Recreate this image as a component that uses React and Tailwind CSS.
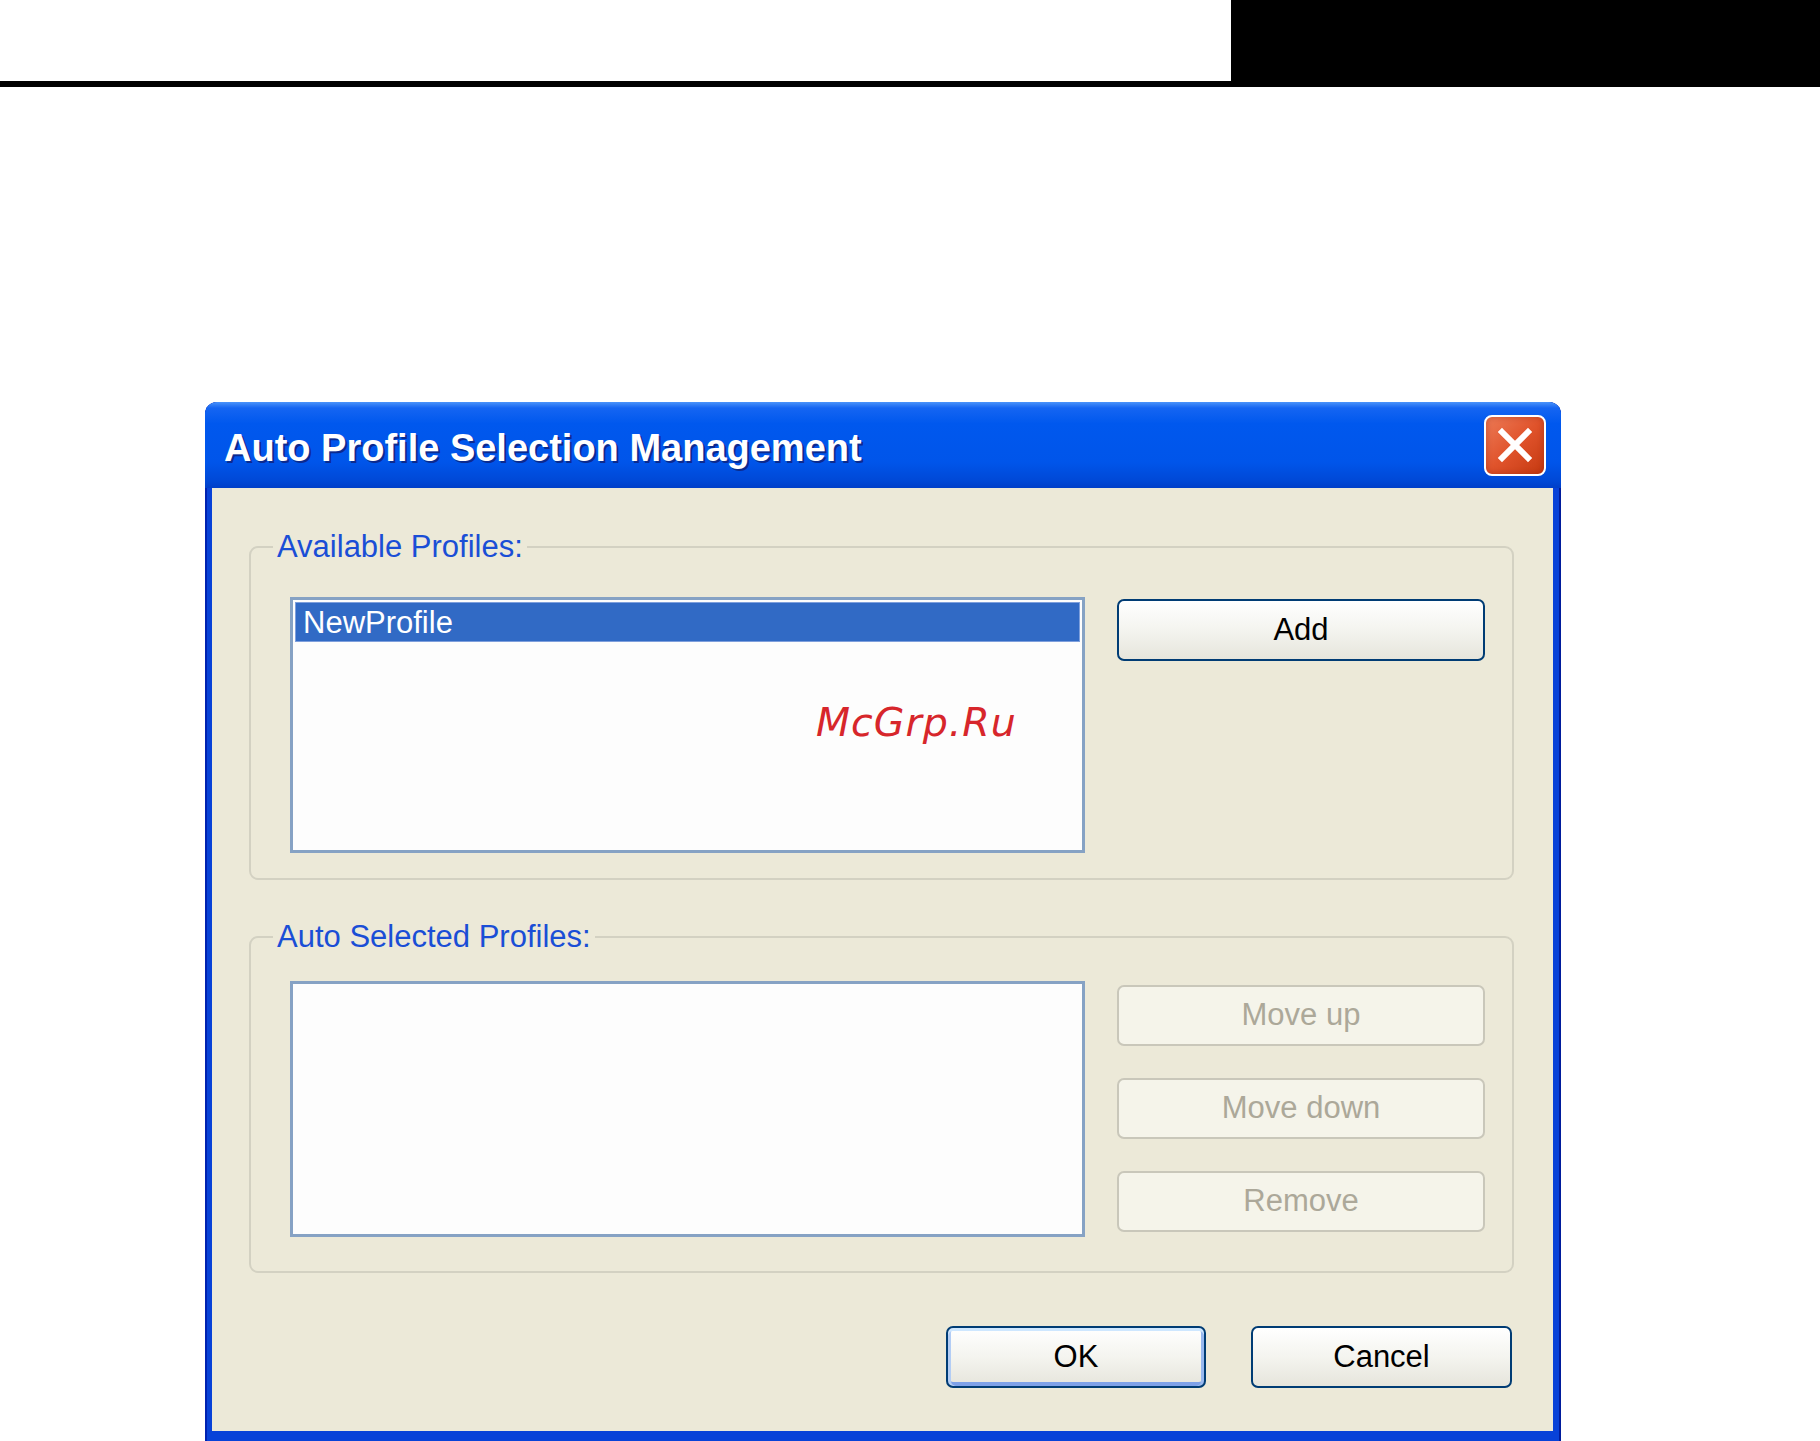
import React from "react"

const XpButton = ({ label, isDefault, disabled, className = "" }) => {
    if (disabled) {
        return (
            <div className={`flex items-center justify-center h-[61px] rounded-[7px] border-2 border-[#c9c7ba] bg-[#f5f4ea] text-[#aca899] ${className}`}>
                {label}
            </div>
        )
    }
    return (
        <div
            className={`flex items-center justify-center h-[62px] rounded-[7px] border-2 border-[#003c74] bg-gradient-to-b from-[#ffffff] via-[#f4f4ef] to-[#e6e5dc] text-black ${
                isDefault ? "shadow-[inset_0_3px_0_#cee7ff,inset_3px_0_0_#b3cdf5,inset_-3px_0_0_#98b8ee,inset_0_-4px_0_#7ea1e8]" : ""
            } ${className}`}
        >
            {label}
        </div>
    )
}

const ListBox = ({ children, className = "" }) => (
    <div className={`relative w-[795px] h-[256px] border-[3px] border-[#86a2c4] bg-[#fdfdfd] p-[2px] ${className}`}>
        {children}
    </div>
)

const Group = ({ title, children, className = "" }) => (
    <fieldset className={`min-w-0 w-[1265px] ml-[37px] rounded-[9px] border-2 border-[#d3d1c2] ${className}`}>
        <legend className="ml-[22px] px-[4px] leading-[36px] text-[#1a4ed6]">{title}</legend>
        {children}
    </fieldset>
)

const CloseButton = () => (
    <div className="ml-auto mr-[15px] w-[62px] h-[61px] rounded-[8px] border-2 border-white bg-gradient-to-br from-[#ec7a55] via-[#e0532b] to-[#c5390f] flex items-center justify-center shadow-[inset_0_0_6px_rgba(120,20,0,0.35)]">
        <svg width="36" height="36" viewBox="0 0 36 36">
            <path d="M5 5 L31 31 M31 5 L5 31" stroke="white" strokeWidth="6" strokeLinecap="square" />
        </svg>
    </div>
)

const Dialog = () => (
    <div className="w-[1356px] h-[1039px] rounded-t-[12px] bg-[#0842d8] flex flex-col overflow-hidden shadow-[inset_2px_0_0_#0022b0,inset_-2px_0_0_#001c9c]">
        <div className="h-[86px] shrink-0 flex items-center [background-image:linear-gradient(to_bottom,#4a93fa_0%,#1565f2_7%,#0058ee_25%,#0055ea_70%,#0048d6_92%,#003fc8_100%)]">
            <span className="pl-[19px] pt-[6px] text-[38px] font-bold text-white [text-shadow:2px_2px_0_#0b2a8f]">
                Auto Profile Selection Management
            </span>
            <CloseButton />
        </div>
        <div className="flex-1 ml-[7px] mr-[8px] mb-[10px] bg-[#ece9d8] text-[31px] flex flex-col">
            <Group title="Available Profiles:" className="mt-[41px]">
                <div className="flex items-start gap-[32px] pl-[39px] pr-[27px] pt-[32px] pb-[25px]">
                    <ListBox>
                        <div className="h-[40px] bg-[#316ac5] border border-[#7e9fdc] flex items-center pl-[7px] text-white leading-none">
                            NewProfile
                        </div>
                        <span className="absolute left-[523px] top-[102px] font-['DejaVu_Sans',sans-serif] italic text-[39.5px] leading-[40px] tracking-[1px] text-[#d7262b]">
                            McGrp.Ru
                        </span>
                    </ListBox>
                    <XpButton label="Add" className="w-[368px] mt-[2px]" />
                </div>
            </Group>
            <Group title="Auto Selected Profiles:" className="mt-[39px]">
                <div className="flex items-start gap-[32px] pl-[39px] pr-[27px] pt-[26px] pb-[34px]">
                    <ListBox />
                    <div className="w-[368px] mt-[4px] flex flex-col gap-[32px]">
                        <XpButton label="Move up" disabled />
                        <XpButton label="Move down" disabled />
                        <XpButton label="Remove" disabled />
                    </div>
                </div>
            </Group>
            <div className="mt-[53px] pr-[41px] flex justify-end gap-[45px]">
                <XpButton label="OK" isDefault className="w-[260px]" />
                <XpButton label="Cancel" className="w-[261px]" />
            </div>
        </div>
    </div>
)

const App = () => {
    return (
        <div className="w-[1820px] h-[1441px] bg-white overflow-hidden font-['Liberation_Sans',Arial,sans-serif]">
            <div className="flex h-[87px]">
                <div className="w-[1231px] bg-white border-b-[6px] border-black" />
                <div className="flex-1 bg-black" />
            </div>
            <div className="pl-[205px] pt-[315px]">
                <Dialog />
            </div>
        </div>
    )
}

export default App
